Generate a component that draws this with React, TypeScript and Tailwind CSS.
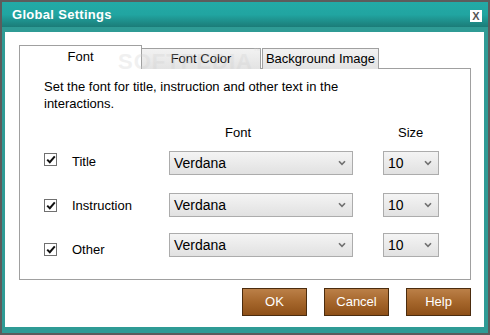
import React from "react";

const font = { fontFamily: '"Liberation Sans", Arial, sans-serif' };

function Chevron() {
  return (
    <svg width="8" height="6" viewBox="0 0 8 6" className="shrink-0">
      <path d="M1 1.2 L4 4.4 L7 1.2" fill="none" stroke="#707070" strokeWidth="1.6" />
    </svg>
  );
}

function Check() {
  return (
    <div className="w-[13px] h-[13px] border border-[#707070] bg-white flex items-center justify-center shrink-0">
      <svg width="10" height="9" viewBox="0 0 10 9">
        <path d="M1.2 4.6 L3.8 7.2 L8.8 1.4" fill="none" stroke="#111" strokeWidth="2" />
      </svg>
    </div>
  );
}

function Select({ value, w }: { value: string; w: string }) {
  return (
    <div
      className={`${w} h-[24px] border border-[#acacac] bg-gradient-to-b from-[#f4f4f4] to-[#e1e1e1] flex items-center justify-between pl-[4px] pr-[6px] text-[14px] text-[#000]`}
    >
      <span>{value}</span>
      <Chevron />
    </div>
  );
}

function Row({ label, mt, lt }: { label: string; mt: string; lt: string }) {
  return (
    <div className="flex items-start h-[24px]">
      <div className={`flex items-center w-[125px] ${mt}`}>
        <Check />
        <span className={`ml-[15px] text-[13px] leading-[13px] ${lt}`}>{label}</span>
      </div>
      <Select value="Verdana" w="w-[184px]" />
      <div className="w-[30px]" />
      <Select value="10" w="w-[56px]" />
    </div>
  );
}

function Btn({ label }: { label: string }) {
  return (
    <div className="w-[65px] h-[28px] border border-[#4b2c0e] bg-gradient-to-b from-[#bb8048] via-[#a5662b] to-[#8e5018] flex items-center justify-center text-white text-[13px]">
      {label}
    </div>
  );
}

export default function App() {
  return (
    <div style={font} className="w-[490px] h-[335px] bg-[#5c5c5c] p-[2px]">
      <div className="w-full h-full bg-[#2f9b95] flex flex-col">
        <div className="h-[25px] bg-gradient-to-b from-[#23aaa6] via-[#21a5a1] to-[#1b7c78] flex items-center justify-between pl-[10px] pr-[6px]">
          <span className="text-white font-bold text-[13px] tracking-[0.3px] mt-[1px]">Global Settings</span>
          <div className="w-[12px] h-[12px] bg-white flex items-center justify-center mt-[3px]">
            <span className="text-[#555] font-bold text-[11px] leading-none">X</span>
          </div>
        </div>
        <div className="flex-1 pl-[3px] pr-[4px] pt-[5px] pb-[6px]">
          <div className="w-full h-full bg-white pl-[14px] pr-[12px] pt-[13px] relative">
            <div className="flex items-end h-[24px]">
              <div className="w-[123px] h-[24px] border border-b-0 border-[#a0a0a0] bg-white flex items-center justify-center text-[13px] pb-[2px]">
                Font
              </div>
              <div className="w-[119px] h-[21px] border border-b-0 border-l-0 border-[#a0a0a0] bg-gradient-to-b from-[#f2f2f2] to-[#e3e3e3] flex items-center justify-center text-[13px]">
                Font Color
              </div>
              <div className="w-[117px] h-[21px] border border-b-0 border-[#a0a0a0] ml-[1px] bg-gradient-to-b from-[#f2f2f2] to-[#e3e3e3] flex items-center justify-center text-[13px]">
                Background Image
              </div>
            </div>
            <div className="w-[452px] h-[212px] border border-[#a0a0a0] -mt-[1px] pl-[24px] pt-[9px] text-black">
              <p className="text-[13px] leading-[17px] w-[304px]">
                Set the font for title, instruction and other text in the interactions.
              </p>
              <div className="flex text-[13px] leading-[17px] mt-[12px]">
                <span className="ml-[181px]">Font</span>
                <span className="ml-[147px]">Size</span>
              </div>
              <div className="flex flex-col mt-[10px]">
                <Row label="Title" mt="mt-[0px]" lt="mt-[4px]" />
                <div className="h-[18px]" />
                <Row label="Instruction" mt="mt-[6px]" lt="mt-0" />
                <div className="h-[16px]" />
                <Row label="Other" mt="mt-[10px]" lt="mt-0" />
              </div>
            </div>
            <div className="flex justify-end gap-[17px] mt-[8px] w-[452px]">
              <Btn label="OK" />
              <Btn label="Cancel" />
              <Btn label="Help" />
            </div>
            <div className="absolute left-[113px] top-[13px] text-[22px] font-bold tracking-[1px] text-[#d0d0d0] opacity-30 pointer-events-none">
              SOFTPEDIA<span className="text-[9px] align-top">™</span>
            </div>
          </div>
        </div>
      </div>
    </div>
  );
}
